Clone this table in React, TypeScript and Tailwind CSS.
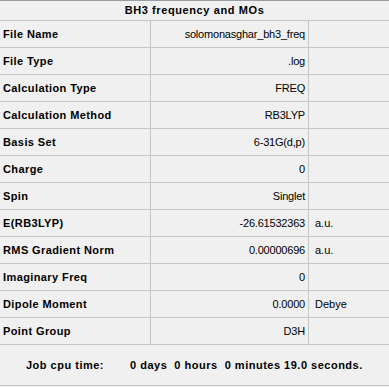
type Row = { label: string; value: string; unit?: string };

const ROWS: Row[] = [
  { label: "File Name", value: "solomonasghar_bh3_freq" },
  { label: "File Type", value: ".log" },
  { label: "Calculation Type", value: "FREQ" },
  { label: "Calculation Method", value: "RB3LYP" },
  { label: "Basis Set", value: "6-31G(d,p)" },
  { label: "Charge", value: "0" },
  { label: "Spin", value: "Singlet" },
  { label: "E(RB3LYP)", value: "-26.61532363", unit: "a.u." },
  { label: "RMS Gradient Norm", value: "0.00000696", unit: "a.u." },
  { label: "Imaginary Freq", value: "0" },
  { label: "Dipole Moment", value: "0.0000", unit: "Debye" },
  { label: "Point Group", value: "D3H" },
];

export default function App() {
  return (
    <div
      className="w-[389px] h-[387px] bg-[#f0f0f0] text-[11px] text-black border-t border-[#9a9ea4]"
      style={{ fontFamily: '"Liberation Sans", Arial, sans-serif' }}
    >
      <div className="h-[20px] border-b border-[#c6c6c6] flex items-center justify-center font-bold tracking-[0.6px]">
        BH3 frequency and MOs
      </div>
      {ROWS.map((r) => (
        <div key={r.label} className="h-[27px] border-b border-[#c6c6c6] flex">
          <div className="w-[151px] border-r border-[#c6c6c6] flex items-center pl-[3px] font-bold tracking-[0.4px]">
            {r.label}
          </div>
          <div className="w-[158px] border-r border-[#c6c6c6] flex items-center justify-end pr-[3px] tracking-[-0.2px]">
            {r.value}
          </div>
          <div className="flex-1 flex items-center pl-[6px]">{r.unit}</div>
        </div>
      ))}
      <div className="h-[41px] border-b border-[#c6c6c6] flex items-center pl-[26px] font-bold whitespace-pre tracking-[0.5px]">
        <span className="w-[104px]">Job cpu time:</span>
        <span>0 days  0 hours  0 minutes 19.0 seconds.</span>
      </div>
    </div>
  );
}
